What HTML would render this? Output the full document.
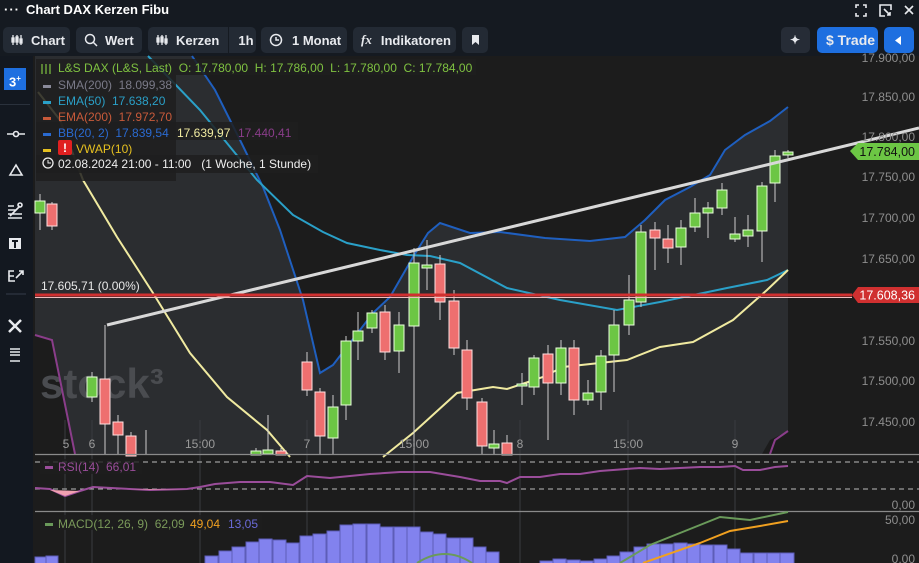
<!DOCTYPE html>
<html><head><meta charset="utf-8"><style>
*{margin:0;padding:0;box-sizing:border-box}
body{width:919px;height:563px;overflow:hidden;background:#151a21;font-family:"Liberation Sans",sans-serif;position:relative;color:#fff}
.top{position:absolute;left:0;top:0;width:919px;height:22px;}
.btn{position:absolute;top:27px;height:26px;background:#232a34;border-radius:5px;font-size:13px;font-weight:bold;color:#e8eaee;display:flex;align-items:center;padding-left:8px;white-space:nowrap}
.side{position:absolute;left:0;top:56px;width:33px;height:507px;background:#131820}
svg text{white-space:pre}
</style></head><body>
<div class="top">
<span style="position:absolute;left:4px;top:2px;font-size:13px;font-weight:bold;letter-spacing:1px">···</span>
<span style="position:absolute;left:26px;top:2px;font-size:13px;font-weight:bold">Chart DAX Kerzen Fibu</span>
<svg style="position:absolute;left:853px;top:3px" width="64" height="15" viewBox="0 0 64 15" fill="none" stroke="#e8eaee" stroke-width="1.6">
<path d="M3 5V2h3M10 2h3v3M13 10v3h-3M6 13H3v-3"/>
<path d="M32 13h-5V2h11v5M31 6l6 6M37 9v3h-3"/>
<path d="M52 3l8 8M60 3l-8 8"/></svg>
</div>
<div class="btn" style="left:3px;width:67px"><svg width="12" height="12" viewBox="0 0 12 12" style="margin-right:8px" stroke="#e8eaee" fill="none" stroke-width="1.3"><path d="M2 1v10M6 1v10M10 1v10"/><rect x="1" y="4" width="2" height="4" fill="#e8eaee"/><rect x="5" y="3" width="2" height="5"/><rect x="9" y="5" width="2" height="4" fill="#e8eaee"/></svg>Chart</div>
<div class="btn" style="left:76px;width:66px"><svg width="14" height="14" viewBox="0 0 14 14" fill="none" stroke="#e8eaee" stroke-width="1.5" style="margin-right:7px"><circle cx="6" cy="6" r="4.5"/><path d="M9.5 9.5l3.5 3.5"/></svg>Wert</div>
<div class="btn" style="left:148px;width:108px"><svg width="12" height="12" viewBox="0 0 12 12" style="margin-right:8px" stroke="#e8eaee" fill="none" stroke-width="1.3"><path d="M2 1v10M6 1v10M10 1v10"/><rect x="1" y="4" width="2" height="4" fill="#e8eaee"/><rect x="5" y="3" width="2" height="5"/><rect x="9" y="5" width="2" height="4" fill="#e8eaee"/></svg>Kerzen<span style="display:inline-block;width:1px;height:26px;background:#151a21;margin:0 9px 0 9px"></span>1h</div>
<div class="btn" style="left:261px;width:86px"><svg width="14" height="14" viewBox="0 0 14 14" fill="none" stroke="#e8eaee" stroke-width="1.5" style="margin-right:9px"><circle cx="7" cy="7" r="5.5"/><path d="M7 4v3h3"/></svg>1 Monat</div>
<div class="btn" style="left:353px;width:103px"><i style="font-family:'Liberation Serif',serif;margin-right:9px;font-size:13px">fx</i>Indikatoren</div>
<div class="btn" style="left:462px;width:26px;padding-left:10px"><svg width="7" height="10"><path d="M0 0h7v10L3.5 7 0 10z" fill="#e8eaee"/></svg></div>
<div class="btn" style="left:781px;width:29px;background:#262c36;padding-left:9px"><span style="font-size:12px">✦</span></div>
<div class="btn" style="left:817px;width:61px;background:#1e6fe0;padding-left:9px;font-size:14px">$&nbsp;Trade</div>
<div class="btn" style="left:884px;width:30px;background:#1e6fe0;padding-left:11px"><svg width="6" height="9"><path d="M6 0v9L0 4.5z" fill="#fff"/></svg></div>

<div class="side">
<div style="position:absolute;left:4px;top:12px;width:22px;height:22px;background:#1e6fe0;font-size:13px;font-weight:bold;text-align:center;line-height:22px">3<sup style="font-size:8px">+</sup></div>
<div style="position:absolute;left:0;top:48px;width:30px;height:1px;background:#2a313c"></div>
<svg style="position:absolute;left:6px;top:70px" width="20" height="260" viewBox="0 0 20 260" fill="none" stroke="#e8eaee" stroke-width="1.6">
<path d="M1 8h18"/><circle cx="10" cy="8" r="2.5" fill="#131820"/>
<path d="M10 39l6 10H4z"/>
<path d="M2 84h8M2 80h6M2 88h14M2 92h14M4 90l10-10"/><circle cx="14" cy="79" r="2"/>
<rect x="3" y="112" width="12" height="11" fill="#e8eaee" stroke="none"/><path d="M6 115h6M9 115v7" stroke="#131820" stroke-width="2"/>
<path d="M8 145H3v10h6M3 150h5M10 152l7-7M13 145h4v4"/>
<path d="M0 168h30" stroke="#2a313c"/>
<path d="M3 194l12 12M15 194L3 206" stroke-width="2.5"/>
<path d="M4 223h10M4 229h10M4 235h10M4 226h10" stroke-width="1.6"/>
</svg>
</div>

<svg style="position:absolute;left:0;top:0" width="919" height="563" viewBox="0 0 919 563" font-family="Liberation Sans, sans-serif">
<rect x="33" y="56" width="886" height="507" fill="#1c1c1c"/>
<polygon fill="#2b2d30" points="35,56 192,56 215,90 240,140 263,187 280,230 303,300 320,373 333,365 350,343 373,313 390,297 413,257 428,233 440,223 470,233 500,232 545,238 590,241 625,237 645,220 665,200 690,187 710,175 725,150 745,135 770,121 788,107 788,431 770,440 762,454 75,454 52,340 35,335"/>
<g stroke="#3a3c40" stroke-width="1">
<path d="M65 420V563M92 420V563M200 420V563M307 420V563M414 420V563M520 420V563M628 420V563M735 420V563"/>
</g>
<text x="40" y="398" font-size="42" font-weight="bold" fill="#4a4c50">stock³</text>
<polyline fill="none" stroke="#1f5fbf" stroke-width="2" points="192,56 215,90 240,140 263,187 280,230 303,300 320,373 333,365 350,343 373,313 390,297 413,257 428,233 440,223 470,233 500,232 545,238 590,241 625,237 645,220 665,200 690,187 710,175 725,150 745,135 770,121 788,107"/>
<polyline fill="none" stroke="#2aa0c8" stroke-width="2" points="148,56 200,110 257,180 293,215 323,232 347,243 380,250 407,255 430,256 460,263 507,288 560,300 617,310 660,302 727,288 767,280 788,270"/>
<polyline fill="none" stroke="#f0eaa0" stroke-width="2" points="38,92 60,120 83,180 117,237 153,293 190,353 227,397 267,430 290,457"/>
<polyline fill="none" stroke="#f0eaa0" stroke-width="2" points="383,457 413,433 457,393 493,387 507,389 543,377 563,367 627,360 660,347 693,342 733,320 767,290 788,270"/>
<polyline fill="none" stroke="#8a3d8a" stroke-width="2" points="35,335 52,340 75,454"/>
<polyline fill="none" stroke="#8a3d8a" stroke-width="2" points="770,454 775,440 788,431"/>
<g stroke-width="1">
<g stroke="#ccc"><path d="M40 194V230M52 202V230M92 372V402M105 325V454M118 415V454M131 432V454M146 430V454M256 448V454M268 415V454M281 448V454M307 352V396M320 388V454M333 395V454M346 336V420M358 312V360M372 310V333M385 305V360M399 312V373M414 248V454M427 240V290M440 255V320M454 290V355M467 340V410M482 398V454M494 430V454M507 435V454M522 373V405M534 355V395M548 345V440M561 340V395M574 340V415M588 380V405M601 350V410M614 310V392M629 275V335M641 225V307M655 222V270M668 225V263M681 220V265M695 198V232M708 202V238M722 183V215M735 217V242M748 215V247M762 182V262M775 150V202M788 150V158"/></g>
<g fill="#6cc644" stroke="#eaffdd"><rect x="35" y="201" width="10" height="12"/><rect x="87" y="377" width="10" height="20"/><rect x="251" y="451" width="10" height="4"/><rect x="263" y="450" width="10" height="4"/><rect x="328" y="407" width="10" height="31"/><rect x="341" y="341" width="10" height="64"/><rect x="353" y="331" width="10" height="10"/><rect x="367" y="313" width="10" height="15"/><rect x="394" y="325" width="10" height="26"/><rect x="409" y="263" width="10" height="63"/><rect x="422" y="265" width="10" height="3"/><rect x="489" y="444" width="10" height="4"/><rect x="517" y="384" width="10" height="2"/><rect x="529" y="358" width="10" height="29"/><rect x="556" y="348" width="10" height="35"/><rect x="583" y="393" width="10" height="7"/><rect x="596" y="356" width="10" height="36"/><rect x="609" y="325" width="10" height="30"/><rect x="624" y="300" width="10" height="25"/><rect x="636" y="232" width="10" height="70"/><rect x="676" y="228" width="10" height="19"/><rect x="690" y="213" width="10" height="14"/><rect x="703" y="208" width="10" height="5"/><rect x="717" y="190" width="10" height="18"/><rect x="730" y="234" width="10" height="5"/><rect x="743" y="230" width="10" height="6"/><rect x="757" y="186" width="10" height="45"/><rect x="770" y="156" width="10" height="27"/><rect x="783" y="152" width="10" height="3"/></g>
<g fill="#ee6f6f" stroke="#ffe0e0"><rect x="47" y="204" width="10" height="22"/><rect x="100" y="379" width="10" height="45"/><rect x="113" y="422" width="10" height="13"/><rect x="126" y="436" width="10" height="20"/><rect x="276" y="451" width="10" height="4"/><rect x="302" y="362" width="10" height="28"/><rect x="315" y="392" width="10" height="44"/><rect x="380" y="312" width="10" height="40"/><rect x="435" y="264" width="10" height="38"/><rect x="449" y="301" width="10" height="47"/><rect x="462" y="350" width="10" height="48"/><rect x="477" y="402" width="10" height="44"/><rect x="502" y="443" width="10" height="12"/><rect x="543" y="354" width="10" height="29"/><rect x="569" y="348" width="10" height="52"/><rect x="650" y="230" width="10" height="8"/><rect x="663" y="239" width="10" height="9"/></g>
</g>
<path d="M107 325L919 128" stroke="#d8d8d8" stroke-width="3"/>
<path d="M35 295H852" stroke="#d03030" stroke-width="3"/>
<path d="M35 297.5H852" stroke="#f0c0c0" stroke-width="1"/>
<path d="M852 295l6-8h61v16h-61z" fill="#d03030"/>
<text x="915" y="299.5" text-anchor="end" font-size="12.5" fill="#fff">17.608,36</text>
<path d="M850 151l8-8h61v17h-61z" fill="#6cc644"/>
<text x="915" y="156" text-anchor="end" font-size="12.5" fill="#111">17.784,00</text>
<text x="41" y="290" font-size="12" fill="#e8e8e8">17.605,71 (0.00%)</text>
<g font-size="12" fill="#8e8e8e" text-anchor="end">
<text x="915" y="62">17.900,00</text><text x="915" y="101">17.850,00</text><text x="915" y="141">17.800,00</text><text x="915" y="181">17.750,00</text><text x="915" y="222">17.700,00</text><text x="915" y="263">17.650,00</text><text x="915" y="345">17.550,00</text><text x="915" y="385">17.500,00</text><text x="915" y="426">17.450,00</text>
<text x="915" y="509">0,00</text><text x="915" y="524">50,00</text><text x="915" y="563">0,00</text>
</g>
<g font-size="12" fill="#9a9a9a" text-anchor="middle">
<text x="66" y="448">5</text><text x="92" y="448">6</text><text x="200" y="448">15:00</text><text x="307" y="448">7</text><text x="414" y="448">15:00</text><text x="520" y="448">8</text><text x="628" y="448">15:00</text><text x="735" y="448">9</text>
</g>
<path d="M35 454.5H919M35 511.5H919" stroke="#8a8a8a" stroke-width="1.2"/>
<path d="M35 462H919M35 489H919" stroke="#bbb" stroke-dasharray="5,4" stroke-width="1"/>
<path d="M35 488L50 489 65 496 80 491 93 487 130 489 150 490 187 489 200 487 215 484 240 482 270 482 293 485 307 476 330 478 350 476 370 474 400 472 430 472 460 477 480 481 500 481 507 483 520 477 540 477 560 474 580 474 600 471 640 468 660 469 700 467 720 467 735 466 743 470 760 470 775 467 788 466" fill="none" stroke="#9a4d9a" stroke-width="2"/>
<path d="M50 490L65 496 80 491z M130 489L150 490 187 490z" fill="#f0a0b0"/>
<g fill="#8282ee" stroke="#5d5db8" stroke-width="1">
<rect x="35" y="557" width="11" height="8"/><rect x="46" y="556" width="12" height="9"/>
<rect x="205" y="556" width="13" height="9"/><rect x="219" y="551" width="13" height="14"/><rect x="232" y="547" width="13" height="18"/><rect x="246" y="542" width="13" height="23"/><rect x="259" y="539" width="13" height="26"/><rect x="273" y="540" width="13" height="25"/><rect x="286" y="543" width="13" height="22"/><rect x="300" y="536" width="13" height="29"/><rect x="313" y="534" width="13" height="31"/><rect x="327" y="531" width="13" height="34"/><rect x="340" y="525" width="13" height="40"/><rect x="353" y="524" width="13" height="41"/><rect x="367" y="524" width="13" height="41"/><rect x="380" y="527" width="13" height="38"/><rect x="394" y="527" width="13" height="38"/><rect x="407" y="527" width="13" height="38"/><rect x="420" y="532" width="13" height="33"/><rect x="433" y="534" width="13" height="31"/><rect x="447" y="538" width="13" height="27"/><rect x="460" y="538" width="13" height="27"/><rect x="473" y="547" width="13" height="18"/><rect x="486" y="552" width="13" height="13"/>
<rect x="540" y="561" width="13" height="4"/><rect x="553" y="559" width="13" height="6"/><rect x="567" y="560" width="13" height="5"/><rect x="580" y="561" width="13" height="4"/><rect x="594" y="559" width="13" height="6"/><rect x="607" y="556" width="13" height="9"/><rect x="620" y="552" width="13" height="13"/><rect x="634" y="547" width="13" height="18"/><rect x="647" y="544" width="13" height="21"/><rect x="660" y="544" width="13" height="21"/><rect x="674" y="543" width="13" height="22"/><rect x="687" y="544" width="13" height="21"/><rect x="700" y="545" width="13" height="20"/><rect x="714" y="545" width="13" height="20"/><rect x="727" y="549" width="13" height="16"/><rect x="740" y="553" width="13" height="12"/><rect x="754" y="553" width="13" height="12"/><rect x="767" y="553" width="13" height="12"/><rect x="780" y="553" width="14" height="12"/>
</g>
<path d="M417 563Q445 545 472 563" fill="none" stroke="#6a9a5a" stroke-width="2"/>
<path d="M620 563L650 545 700 525 720 517 750 520 788 512" fill="none" stroke="#6a9a5a" stroke-width="2"/>
<path d="M643 563L700 543 730 531 760 526 788 521" fill="none" stroke="#f0a020" stroke-width="2"/>
<rect x="36" y="59" width="440" height="16" fill="#1e1e1e" opacity=".85"/>
<rect x="36" y="75" width="140" height="106" fill="#1e1e1e" opacity=".85"/>
<rect x="36" y="122" width="262" height="18" fill="#1e1e1e" opacity=".85"/>
<rect x="36" y="155" width="282" height="18" fill="#1e1e1e" opacity=".85"/>
<g font-size="12">
<g stroke="#7fc241" stroke-width="1.2"><path d="M42 64v10M46 64v10M50 64v10"/></g>
<text x="58" y="72" fill="#7fc241">L&amp;S DAX (L&amp;S, Last)  O: 17.780,00  H: 17.786,00  L: 17.780,00  C: 17.784,00</text>
<rect x="43" y="85" width="8" height="3" fill="#8a8a9a"/><text x="58" y="89" fill="#7a7a88">SMA(200)  18.099,38</text>
<rect x="43" y="101" width="8" height="3" fill="#2aa0c8"/><text x="58" y="105" fill="#2aa0c8">EMA(50)  17.638,20</text>
<rect x="43" y="117" width="8" height="3" fill="#c85a3a"/><text x="58" y="121" fill="#c85a3a">EMA(200)  17.972,70</text>
<rect x="43" y="133" width="8" height="3" fill="#2a6ad0"/><text x="58" y="137" fill="#2a6ad0">BB(20, 2)  17.839,54</text><text x="177" y="137" fill="#f0eaa0">17.639,97</text><text x="238" y="137" fill="#8a3d8a">17.440,41</text>
<rect x="43" y="149" width="8" height="3" fill="#e6c020"/><rect x="58" y="140" width="14" height="15" rx="2" fill="#e02020"/><text x="65" y="152" fill="#fff" font-weight="bold" text-anchor="middle">!</text><text x="76" y="153" fill="#e6c020">VWAP(10)</text>
<circle cx="48" cy="163" r="5" fill="none" stroke="#eee" stroke-width="1.3"/><path d="M48 160v3h3" stroke="#eee" fill="none"/>
<text x="58" y="168" fill="#eee">02.08.2024 21:00 - 11:00   (1 Woche, 1 Stunde)</text>
<rect x="40" y="459" width="102" height="15" fill="#1e1e1e" opacity=".8"/>
<rect x="45" y="466" width="8" height="3" fill="#9a4d9a"/><text x="58" y="471" fill="#9a4d9a">RSI(14)  66,01</text>
<rect x="40" y="515" width="222" height="15" fill="#1e1e1e" opacity=".8"/>
<rect x="45" y="523" width="8" height="3" fill="#6a9a5a"/><text x="58" y="528" fill="#7a9a5a">MACD(12, 26, 9)  62,09</text><text x="190" y="528" fill="#f0a020">49,04</text><text x="228" y="528" fill="#6a6ad8">13,05</text>
</g>
</svg>
</body></html>
